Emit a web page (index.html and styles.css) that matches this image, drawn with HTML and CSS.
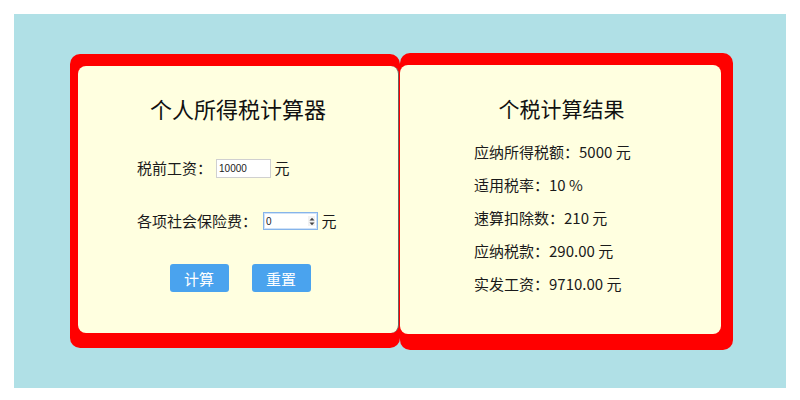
FILE: index.html
```html
<!DOCTYPE html>
<html lang="zh-CN">
<head>
<meta charset="utf-8">
<title>个人所得税计算器</title>
<link rel="stylesheet" href="styles.css">
</head>
<body>
<div class="stage">
  <div class="cards">
    <div class="frame frame-left">
      <div class="panel panel-left">
        <h1 class="title">个人所得税计算器</h1>
        <div class="row">税前工资：<input class="field" type="text" value="10000"> 元</div>
        <div class="row row-second">各项社会保险费：<span class="num"><input class="field field-num" type="text" value="0"><span class="spin"><svg width="6" height="9" viewBox="0 0 6 9"><path d="M0.5 3.5 L3 0.8 L5.5 3.5 Z M0.5 5.5 L3 8.2 L5.5 5.5 Z" fill="#444"/></svg></span></span> 元</div>
        <div class="actions">
          <button class="btn" type="button">计算</button>
          <button class="btn" type="button">重置</button>
        </div>
      </div>
    </div>
    <div class="frame frame-right">
      <div class="panel panel-right">
        <h2 class="title title-small">个税计算结果</h2>
        <ul class="results">
          <li>应纳所得税额：5000 元</li>
          <li>适用税率：10 %</li>
          <li>速算扣除数：210 元</li>
          <li>应纳税款：290.00 元</li>
          <li>实发工资：9710.00 元</li>
        </ul>
      </div>
    </div>
  </div>
</div>
</body>
</html>
```

FILE: styles.css
```css
html, body {
  margin: 0;
  padding: 0;
  background: #ffffff;
}
body {
  padding: 14px;
  font-family: "Noto Sans CJK SC", "Noto Sans", sans-serif;
  color: #1a1a1a;
}
.stage {
  width: 772px;
  height: 374px;
  background: #b0e0e6;
  display: flex;
  align-items: center;
  justify-content: center;
}
.cards {
  display: flex;
  align-items: center;
  margin-left: 3px;
}
.frame {
  background: #ff0000;
  border-radius: 10px;
  box-sizing: border-box;
  display: flex;
}
.frame-left {
  width: 330px;
  height: 294px;
  padding: 12px 1px 15px 8px;
}
.frame-right {
  width: 333px;
  height: 297px;
  padding: 12px 12px 16px 0;
}
.panel {
  flex: 1;
  background: #ffffe0;
  border-radius: 8px;
  box-sizing: border-box;
}
.panel-left {
  border-right: 1px solid #666;
  padding-top: 27px;
}
.panel-right {
  padding-top: 28px;
  padding-left: 1px;
}
.title {
  margin: 0;
  font-size: 22px;
  line-height: 30px;
  font-weight: normal;
  text-align: center;
  color: #111;
}
.title-small {
  font-size: 21px;
  padding-left: 1px;
}
.row {
  font-size: 15px;
  line-height: 24px;
  height: 24px;
  padding-left: 59px;
  margin-top: 33px;
  display: flex;
  align-items: center;
  white-space: pre;
}
.row-second {
  margin-top: 29px;
}
.field {
  width: 55px;
  height: 19px;
  box-sizing: border-box;
  border: 1px solid #d0d0d0;
  background: #fff;
  font-family: "Liberation Sans", Arial, sans-serif;
  font-size: 10px;
  padding: 0 2px;
  margin: 0 0 0 4px;
  color: #222;
  outline: none;
}
.num {
  position: relative;
  display: inline-flex;
  margin-left: 6px;
}
.field-num {
  margin: 0;
  border: 1px solid #86b4ea;
  box-shadow: inset 0 0 0 1px #cfe2f8;
  height: 18px;
}
.spin {
  position: absolute;
  right: 3px;
  top: 4px;
  width: 7px;
  height: 10px;
  background: #f2f2f2;
  display: flex;
  align-items: center;
  justify-content: center;
}
.actions {
  display: flex;
  justify-content: center;
  gap: 23px;
  margin-top: 31px;
  padding-left: 4px;
}
.btn {
  width: 59px;
  height: 28px;
  border: none;
  border-radius: 3px;
  background: #4aa3ee;
  color: #fff;
  font-family: "Noto Sans CJK SC", sans-serif;
  font-size: 15px;
  padding: 0;
  cursor: pointer;
}
.results {
  list-style: none;
  margin: 12px 0 0;
  padding: 0 0 0 73px;
}
.results li {
  font-size: 15px;
  line-height: 33px;
  height: 33px;
}
```
